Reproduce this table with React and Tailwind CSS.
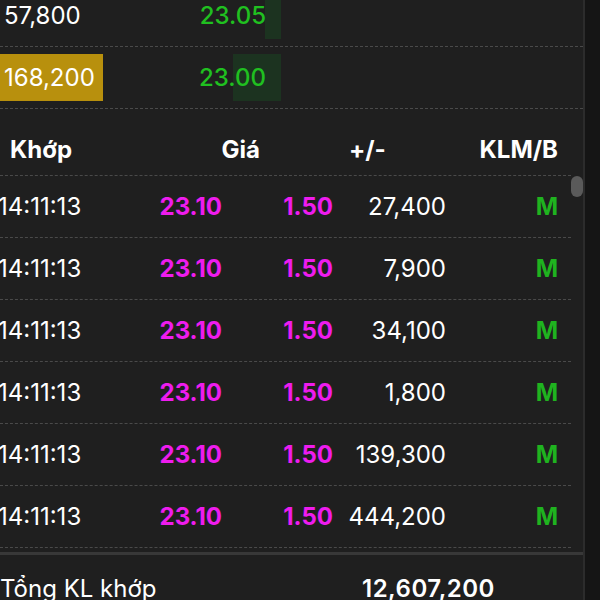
import React from 'react';

const khop = [
  { time: '14:11:13', gia: '23.10', thayDoi: '1.50', kl: '27,400', mb: 'M' },
  { time: '14:11:13', gia: '23.10', thayDoi: '1.50', kl: '7,900', mb: 'M' },
  { time: '14:11:13', gia: '23.10', thayDoi: '1.50', kl: '34,100', mb: 'M' },
  { time: '14:11:13', gia: '23.10', thayDoi: '1.50', kl: '1,800', mb: 'M' },
  { time: '14:11:13', gia: '23.10', thayDoi: '1.50', kl: '139,300', mb: 'M' },
  { time: '14:11:13', gia: '23.10', thayDoi: '1.50', kl: '444,200', mb: 'M' },
];

// bước giá bên mua
const buy = [
  { kl: '57,800', gia: '23.05', bar: 16, hot: false },
  { kl: '168,200', gia: '23.00', bar: 48, hot: true },
];

export default function App() {
  return (
    <div
      className="w-[600px] h-[600px] overflow-hidden bg-[#1f1f1f] text-white flex text-[24px]"
      style={{ fontFamily: 'Inter, "Noto Sans", sans-serif' }}
    >
      <div className="w-[583px] flex flex-col shrink-0">
        {/* Top buy steps */}
        <div className="-mt-[15px] shrink-0">
          {buy.map((b, i) => (
            <div key={i} className="h-[62px] flex border-b border-dashed border-[#4a4a4a] py-[7px]">
              <div className={`w-[103px] flex items-center pl-[4px] ${b.hot ? 'bg-[#b8900d]' : ''}`}>
                {b.kl}
              </div>
              <div className="w-[178px] relative flex items-center justify-end pr-[15px]">
                <div className="absolute right-0 top-0 bottom-0 bg-[#1c3320]" style={{ width: b.bar }} />
                <span className="relative text-[#20c020] font-medium">{b.gia}</span>
              </div>
            </div>
          ))}
        </div>

        {/* Header */}
        <div className="h-[66px] shrink-0 flex items-center pt-[16px] font-bold">
          <div className="w-[197px] pl-[10px]">Khớp</div>
          <div className="w-[63px] text-right">Giá</div>
          <div className="ml-[89px] w-[50px]">+/-</div>
          <div className="w-[159px] text-right">KLM/B</div>
        </div>

        {/* Matched list */}
        <div className="flex shrink-0">
          <div className="w-[571px]">
            {khop.map((r, i) => (
              <div key={i} className="h-[62px] flex items-center border-t border-dashed border-[#4a4a4a]">
                <div className="w-[100px] -ml-[2px]">{r.time}</div>
                <div className="w-[124px] text-right font-bold text-[#ee1cee]">{r.gia}</div>
                <div className="w-[111px] text-right font-bold text-[#ee1cee]">{r.thayDoi}</div>
                <div className="w-[113px] text-right">{r.kl}</div>
                <div className="w-[112px] text-right font-bold text-[#1fb31f]">{r.mb}</div>
              </div>
            ))}
            <div className="border-t border-dashed border-[#4a4a4a]" />
          </div>
          <div className="w-[12px] pt-[1px]">
            <div className="h-[21px] w-[12px] rounded-full bg-[#5a5a5a]" />
          </div>
        </div>

        <div className="h-[3px] shrink-0 mt-[4px] bg-[#383838]" />

        {/* Footer */}
        <div className="flex shrink-0 items-center pt-[16px]">
          <div className="w-[362px]">Tổng KL khớp</div>
          <div className="font-semibold tracking-[0.5px]">12,607,200</div>
        </div>
      </div>
      <div className="w-[2px] bg-[#2c2c2c]" />
      <div className="flex-1 bg-[#151515]" />
    </div>
  );
}
